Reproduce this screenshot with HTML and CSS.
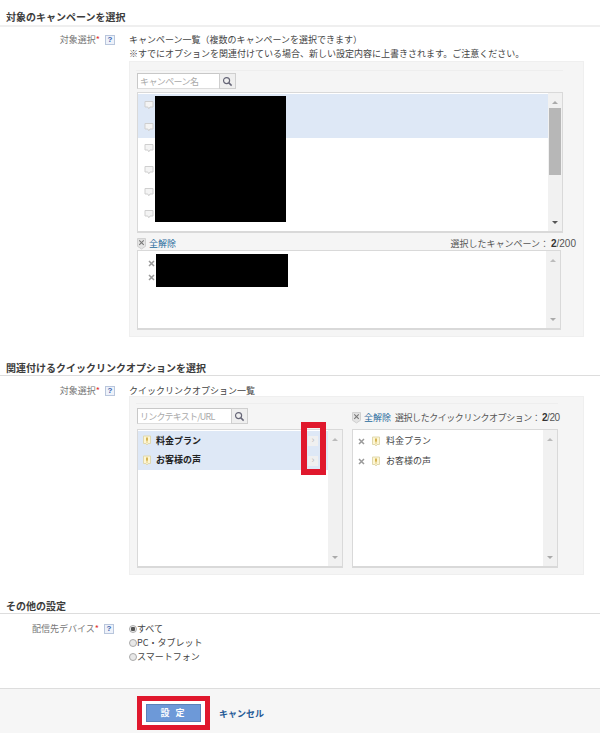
FILE: index.html
```html
<!DOCTYPE html>
<html lang="ja">
<head>
<meta charset="utf-8">
<title>クイックリンクオプション</title>
<link rel="stylesheet" href="styles.css">
</head>
<body>
<svg class="defs" width="0" height="0" aria-hidden="true">
  <symbol id="speech" viewBox="0 0 10 10"><path d="M1 1.500h8v5.500H6L4.800 8.800 3.800 7H1z" fill="#f4f4f4" stroke="#cfcfcf"/></symbol>
  <symbol id="cross" viewBox="0 0 7 7"><path d="M1 1l5 5M6 1L1 6" stroke="#9a9a9a" stroke-width="1.500"/></symbol>
  <symbol id="badge" viewBox="0 0 8 11"><path d="M.5 1h7v7.500H5L4 10 3 8.500H.5z" fill="#fdf6d4" stroke="#e0d8ae"/><path d="M4 2.500v3.200" stroke="#c49a20" stroke-width="1.400"/><path d="M4 6.500v1" stroke="#c49a20" stroke-width="1"/></symbol>
  <symbol id="clear" viewBox="0 0 10 13"><path d="M.5.5h9v8.500L5 12 .5 9z" fill="#e4e4e4" stroke="#cccccc"/><path d="M2.500 2.500l5 5M7.500 2.500l-5 5" stroke="#777" stroke-width="1.200"/></symbol>
  <symbol id="glass" viewBox="0 0 12 12"><circle cx="5" cy="5" r="3.300" fill="none" stroke="#667" stroke-width="1.300"/><path d="M7.500 7.500l3 3" stroke="#667" stroke-width="1.600"/></symbol>
</svg>

<section class="sec sec-campaign">
  <h2 class="sec-title">対象のキャンペーンを選択</h2>
  <div class="field">
    <div class="label">対象選択<em>*</em><span class="help">?</span></div>
    <div class="body">
      <p class="note">キャンペーン一覧（複数のキャンペーンを選択できます）<br>※すでにオプションを関連付けている場合、新しい設定内容に上書きされます。ご注意ください。</p>
      <div class="panel panel-campaign">
        <div class="search search-campaign"><input class="search-input" placeholder="キャンペーン名"><button class="search-btn" type="button"><svg class="i12"><use href="#glass"/></svg></button></div>
        <div class="list list-main">
          <div class="rows">
            <div class="row row-tall sel"><svg class="i10"><use href="#speech"/></svg></div>
            <div class="row row-tall sel"><svg class="i10"><use href="#speech"/></svg></div>
            <div class="row row-tall"><svg class="i10"><use href="#speech"/></svg></div>
            <div class="row row-tall"><svg class="i10"><use href="#speech"/></svg></div>
            <div class="row row-tall"><svg class="i10"><use href="#speech"/></svg></div>
            <div class="row row-tall"><svg class="i10"><use href="#speech"/></svg></div>
          </div>
          <div class="scroll"><span class="up dark"></span><span class="thumb"></span><span class="down dark"></span></div>
          <div class="mask mask-main"></div>
        </div>
        <div class="selbar">
          <span class="clear"><svg class="i-clear"><use href="#clear"/></svg><a class="link">全解除</a></span>
          <span class="count">選択したキャンペーン： <b>2</b><span class="num">/200</span></span>
        </div>
        <div class="list list-chosen">
          <div class="rows">
            <div class="row row-chosen"><svg class="i7"><use href="#cross"/></svg></div>
            <div class="row row-chosen"><svg class="i7"><use href="#cross"/></svg></div>
          </div>
          <div class="scroll"><span class="up"></span><span class="down"></span></div>
          <div class="mask mask-chosen"></div>
        </div>
      </div>
    </div>
  </div>
</section>

<section class="sec sec-link">
  <h2 class="sec-title">関連付けるクイックリンクオプションを選択</h2>
  <div class="field">
    <div class="label">対象選択<em>*</em><span class="help">?</span></div>
    <div class="body">
      <p class="note">クイックリンクオプション一覧</p>
      <div class="panel panel-link">
        <div class="col">
          <div class="search search-link"><input class="search-input" placeholder="リンクテキスト/URL"><button class="search-btn" type="button"><svg class="i12"><use href="#glass"/></svg></button></div>
          <div class="list list-pick">
            <div class="rows">
              <div class="row row-opt sel"><svg class="i-badge"><use href="#badge"/></svg><b class="opt">料金プラン</b><span class="add">›</span></div>
              <div class="row row-opt sel"><svg class="i-badge"><use href="#badge"/></svg><b class="opt">お客様の声</b><span class="add">›</span></div>
            </div>
            <div class="scroll"><span class="up"></span><span class="down"></span></div>
          </div>
          <div class="callout"></div>
        </div>
        <div class="col">
          <div class="selbar selbar-link">
            <span class="clear"><svg class="i-clear"><use href="#clear"/></svg><a class="link">全解除</a></span>
            <span class="count">選択したクイックリンクオプション： <b>2</b><span class="num">/20</span></span>
          </div>
          <div class="list list-pick">
            <div class="rows rows-picked">
              <div class="row row-opt"><svg class="i7"><use href="#cross"/></svg><svg class="i-badge"><use href="#badge"/></svg><span class="opt">料金プラン</span></div>
              <div class="row row-opt"><svg class="i7"><use href="#cross"/></svg><svg class="i-badge"><use href="#badge"/></svg><span class="opt">お客様の声</span></div>
            </div>
            <div class="scroll"><span class="up"></span><span class="down"></span></div>
          </div>
        </div>
      </div>
    </div>
  </div>
</section>

<section class="sec sec-other">
  <h2 class="sec-title">その他の設定</h2>
  <div class="field">
    <div class="label">配信先デバイス<em>*</em><span class="help">?</span></div>
    <div class="body radios">
      <label class="radio"><span class="dot on"></span>すべて</label>
      <label class="radio"><span class="dot"></span>PC・タブレット</label>
      <label class="radio"><span class="dot"></span>スマートフォン</label>
    </div>
  </div>
</section>

<footer class="foot">
  <div class="submit-wrap"><button class="submit" type="button">設 定</button></div>
  <a class="cancel">キャンセル</a>
</footer>
</body>
</html>
```
FILE: styles.css
```css
* { box-sizing: border-box; }
html, body { margin: 0; padding: 0; }
body {
  width: 600px;
  height: 733px;
  overflow: hidden;
  display: flex;
  flex-direction: column;
  background: #fff;
  color: #444;
  font: 9px/14px "Noto Sans CJK JP", "Noto Sans", sans-serif;
}
.defs { position: absolute; }
p { margin: 0; }
.sec { flex: none; }
.sec-title {
  margin: 0;
  padding: 0 0 0 6px;
  height: 14px;
  font-size: 10px;
  line-height: 12px;
  font-weight: 700;
  color: #3c3c3c;
  border-bottom: 2px solid #efefef;
  box-sizing: content-box;
}
.sec-campaign { padding-top: 11px; }
.sec-link, .sec-other { margin-top: 23px; }
.sec-link .sec-title, .sec-other .sec-title {
  padding-top: 2px;
  height: 13px;
  border-bottom: 1px solid #ddd;
}
.field { display: flex; padding-top: 6px; }
.sec-link .field, .sec-other .field { padding-top: 8px; }
.sec-link .note { height: 12px; }
.label {
  flex: none;
  width: 129px;
  display: flex;
  justify-content: flex-end;
  align-items: flex-start;
  padding-right: 24px;
  color: #777;
  line-height: 14px;
}
.sec-other .label { padding-right: 25px; }
.label em { color: #e03030; font-style: normal; }
.help {
  flex: none;
  width: 10px;
  height: 10px;
  margin: 2px -10px 0 5px;
  border: 1px solid #b9c6dc;
  background: #eef2fa;
  color: #3a5fae;
  font: 700 8px/8px "Liberation Sans", sans-serif;
  text-align: center;
}
.body { flex: 1; min-width: 0; }
.note { color: #444; }
.panel {
  width: 455px;
  background: #f5f5f5;
  border: 1px solid #efefef;
  padding: 0 7px;
  position: relative;
}
.panel::before {
  content: "";
  position: absolute;
  left: 6px;
  top: 8px;
  border-top: 1px solid #eeeeee;
}
.panel-campaign::before { width: 427px; }
.panel-link::before { width: 422px; top: 6px; }
.panel-campaign { height: 276px; padding-top: 11px; }
.search { display: flex; height: 16px; }
.search-campaign { width: 99px; }
.search-link { width: 111px; }
.search-input {
  flex: 1;
  min-width: 0;
  height: 16px;
  padding: 0 2px;
  border: 1px solid #c8c8c8;
  border-bottom-color: #ddd;
  border-right: 0;
  background: #fff;
  font: 9px "Noto Sans CJK JP", sans-serif;
  letter-spacing: -.6px;
  outline: 0;
}
.search-link .search-input { letter-spacing: -.8px; }
.search-input::placeholder { color: #aaa; opacity: 1; }
.search-btn {
  flex: none;
  width: 17px;
  height: 16px;
  padding: 0;
  display: flex;
  align-items: center;
  justify-content: center;
  border: 1px solid #cfcfcf;
  background: #efefef;
}
.i12 { width: 11px; height: 11px; }
.list {
  position: relative;
  display: flex;
  border: 1px solid #d9d9d9;
  border-width: 1px 1px 2px 1px;
  background: #fff;
}
.rows { flex: 1; min-width: 0; padding-top: 1px; }
.list-main { width: 426px; height: 141px; margin-top: 3px; }
.list-chosen { width: 424px; height: 80px; }
.list-chosen .rows { padding-top: 6px; }
.scroll {
  flex: none;
  width: 14px;
  position: relative;
  background: #f1f1f1;
  display: flex;
  flex-direction: column;
  align-items: center;
  justify-content: space-between;
  padding: 8px 0 7px;
}
.up, .down { width: 0; height: 0; border: 3px solid transparent; border-left-width: 3.5px; border-right-width: 3.5px; }
.up { border-bottom: 3px solid #bbb; border-top: 0; }
.down { border-top: 3px solid #aaa; border-bottom: 0; }
.up.dark { border-bottom-color: #aaa; }
.down.dark { border-top-color: #555; }
.thumb {
  position: absolute;
  left: 1px;
  top: 15px;
  width: 12px;
  height: 67px;
  background: #b7b7b7;
}
.row { display: flex; align-items: center; }
.row-tall { height: 21.8px; padding-left: 6px; }
.sel { background: #dee8f6; }
.i10 { width: 10px; height: 10px; }
.i7 { width: 7px; height: 7px; }
.row-chosen { height: 13.5px; padding-left: 10px; }
.mask { position: absolute; background: #000; }
.mask-main { left: 17px; top: 3px; width: 131px; height: 126px; }
.mask-chosen { left: 18px; top: 3px; width: 132px; height: 33px; }
.selbar {
  display: flex;
  justify-content: space-between;
  align-items: center;
  width: 439px;
  height: 17px;
  padding-top: 4px;
}
.clear { display: flex; align-items: center; gap: 3px; }
.i-clear { width: 9px; height: 12px; }
.link { color: #1f6a9c; }
.count { color: #555; }
.count b, .num { font: 10px "Liberation Sans", sans-serif; }
.count b { font-weight: 700; color: #333; }
.panel-link {
  height: 179px;
  display: flex;
  gap: 9px;
  padding-top: 11px;
}
.col { position: relative; width: 206px; flex: none; }
.list-pick { width: 206px; height: 139px; margin-top: 5px; }
.col + .col { width: 222px; }
.col + .col .list-pick { margin-top: 2px; }
.selbar-link { width: 222px; height: 19px; padding-top: 0; justify-content: flex-start; gap: 4px; }
.selbar-link .count { letter-spacing: -.45px; white-space: nowrap; }
.row-opt { height: 19.5px; padding-left: 5px; gap: 5px; position: relative; color: #333; }
.i-badge { width: 8px; height: 11px; flex: none; }
.opt { font-size: 9px; color: #222; }
.rows-picked { padding-top: 1px; }
.rows-picked .row-opt { height: 20px; gap: 6px; }
.rows-picked .opt { color: #444; }
.rows-picked .i-badge { margin-left: 1px; }
.add {
  position: absolute;
  right: 10px;
  top: 5px;
  width: 10px;
  height: 10px;
  background: #f0f0f0;
  color: #bbb;
  font: 9px/9px "Liberation Sans", sans-serif;
  text-align: center;
}
.callout {
  position: absolute;
  left: 164px;
  top: 14px;
  width: 25px;
  height: 53px;
  border: 6px solid #e0182d;
  pointer-events: none;
}
.radios { display: flex; flex-direction: column; }
.radio { display: flex; align-items: center; height: 14px; color: #444; }
.dot {
  width: 8px;
  height: 8px;
  border-radius: 50%;
  border: 1px solid #aaa;
  background: #e8e8e8;
  display: inline-block;
}
.dot.on { background: radial-gradient(circle, #555 0 2px, #eee 2.5px); }
.foot {
  flex: none;
  margin-top: auto;
  height: 45px;
  display: flex;
  align-items: flex-start;
  background: #f6f6f6;
  border-top: 1px solid #ddd;
  padding-left: 137px;
}
.submit-wrap {
  width: 73px;
  height: 34px;
  margin-top: 7px;
  border: 5px solid #e0182d;
  background: #fff;
  display: flex;
  justify-content: center;
  align-items: center;
}
.submit {
  width: 55px;
  height: 18px;
  padding: 0;
  border: 1px solid #5b82b8;
  background: #6d99d8;
  color: #fff;
  font: 700 9px/14px "Noto Sans CJK JP", sans-serif;
  letter-spacing: 2px;
}
.cancel {
  margin: 18px 0 0 9px;
  color: #1f5a96;
  font-weight: 700;
  font-size: 9px;
}
```
